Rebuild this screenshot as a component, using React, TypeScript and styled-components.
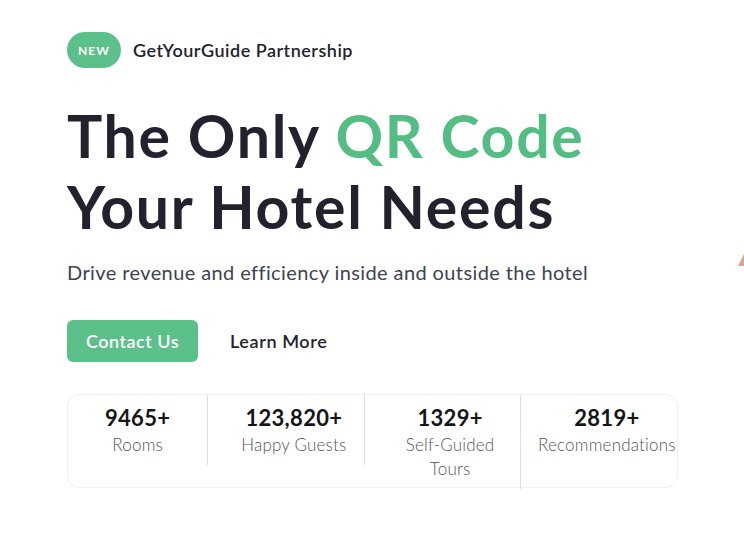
import React from "react";
import styled, { createGlobalStyle } from "styled-components";

const Global = createGlobalStyle`
  html, body { margin: 0; padding: 0; background: #ffffff; }
  body { font-family: "Lato", "Noto Sans", sans-serif; color: #22222e; overflow: hidden; }
  * { box-sizing: border-box; }
`;

const Page = styled.main`
  position: relative;
  width: 744px;
  height: 537px;
  padding: 32px 0 0 67px;
  overflow: hidden;
`;

const TopLine = styled.div`
  display: flex;
  align-items: center;
  gap: 12px;
`;

const Badge = styled.span`
  display: inline-flex;
  align-items: center;
  justify-content: center;
  width: 54px;
  height: 36px;
  border-radius: 18px;
  background: #5cc08b;
  color: #ffffff;
  font-size: 12px;
  font-weight: 700;
  letter-spacing: 1px;
`;

const Partner = styled.span`
  font-size: 18px;
  font-weight: 600;
  letter-spacing: 0.5px;
  color: #22222e;
`;

const Heading = styled.h1`
  margin: 32px 0 0;
  font-size: 59px;
  line-height: 71px;
  font-weight: 700;
  color: #22222e;
  letter-spacing: 1.7px;
`;

const Accent = styled.span`
  color: #53bd84;
`;

const Sub = styled.p`
  margin: 16px 0 0;
  font-size: 20px;
  line-height: 28px;
  color: #3d4352;
  font-weight: 400;
  letter-spacing: 0.4px;
`;

const Actions = styled.div`
  display: flex;
  align-items: center;
  gap: 32px;
  margin-top: 34px;
`;

const Primary = styled.button`
  width: 131px;
  height: 42px;
  border: none;
  border-radius: 6px;
  background: #5cc08b;
  color: #ffffff;
  font-family: inherit;
  font-size: 18px;
  font-weight: 600;
  letter-spacing: 0.5px;
`;

const Secondary = styled.button`
  border: none;
  background: transparent;
  padding: 0;
  color: #22222e;
  font-family: inherit;
  font-size: 18px;
  font-weight: 600;
  letter-spacing: 0.6px;
`;

const Stats = styled.div`
  display: grid;
  grid-template-columns: repeat(4, 1fr);
  column-gap: 16px;
  align-items: start;
  width: 611px;
  height: 94px;
  margin-top: 32px;
  border: 1px solid #f0f0f0;
  border-radius: 12px;
`;

const Stat = styled.div<{ $last?: boolean }>`
  display: flex;
  flex-direction: column;
  align-items: center;
  text-align: center;
  padding: 8px 0 8px;
  border-right: ${(p) => (p.$last ? "none" : "1px solid #dedede")};
`;

const Num = styled.span`
  font-size: 22px;
  line-height: 30px;
  font-weight: 700;
  letter-spacing: 0.3px;
  color: #151515;
`;

const Label = styled.span`
  font-size: 17px;
  line-height: 24px;
  font-weight: 300;
  letter-spacing: 0.2px;
  color: #555555;
`;

const Corner = styled.svg`
  position: absolute;
  right: 0;
  top: 254px;
`;

const stats = [
  { n: "9465+", l: "Rooms" },
  { n: "123,820+", l: "Happy Guests" },
  { n: "1329+", l: <>Self-Guided<br />Tours</> },
  { n: "2819+", l: "Recommendations" },
];

export default function App() {
  return (
    <>
      <Global />
      <Page>
        <TopLine>
          <Badge>NEW</Badge>
          <Partner>GetYourGuide Partnership</Partner>
        </TopLine>
        <Heading>
          The Only <Accent>QR Code</Accent>
          <br />
          Your Hotel Needs
        </Heading>
        <Sub>Drive revenue and efficiency inside and outside the hotel</Sub>
        <Actions>
          <Primary>Contact Us</Primary>
          <Secondary>Learn More</Secondary>
        </Actions>
        <Stats>
          {stats.map((s, i) => (
            <Stat key={i} $last={i === stats.length - 1}>
              <Num>{s.n}</Num>
              <Label>{s.l}</Label>
            </Stat>
          ))}
        </Stats>
        <Corner width="6" height="12" viewBox="0 0 6 12">
          <polygon points="6,0 6,12 0,12" fill="#d9a48a" />
        </Corner>
      </Page>
    </>
  );
}
